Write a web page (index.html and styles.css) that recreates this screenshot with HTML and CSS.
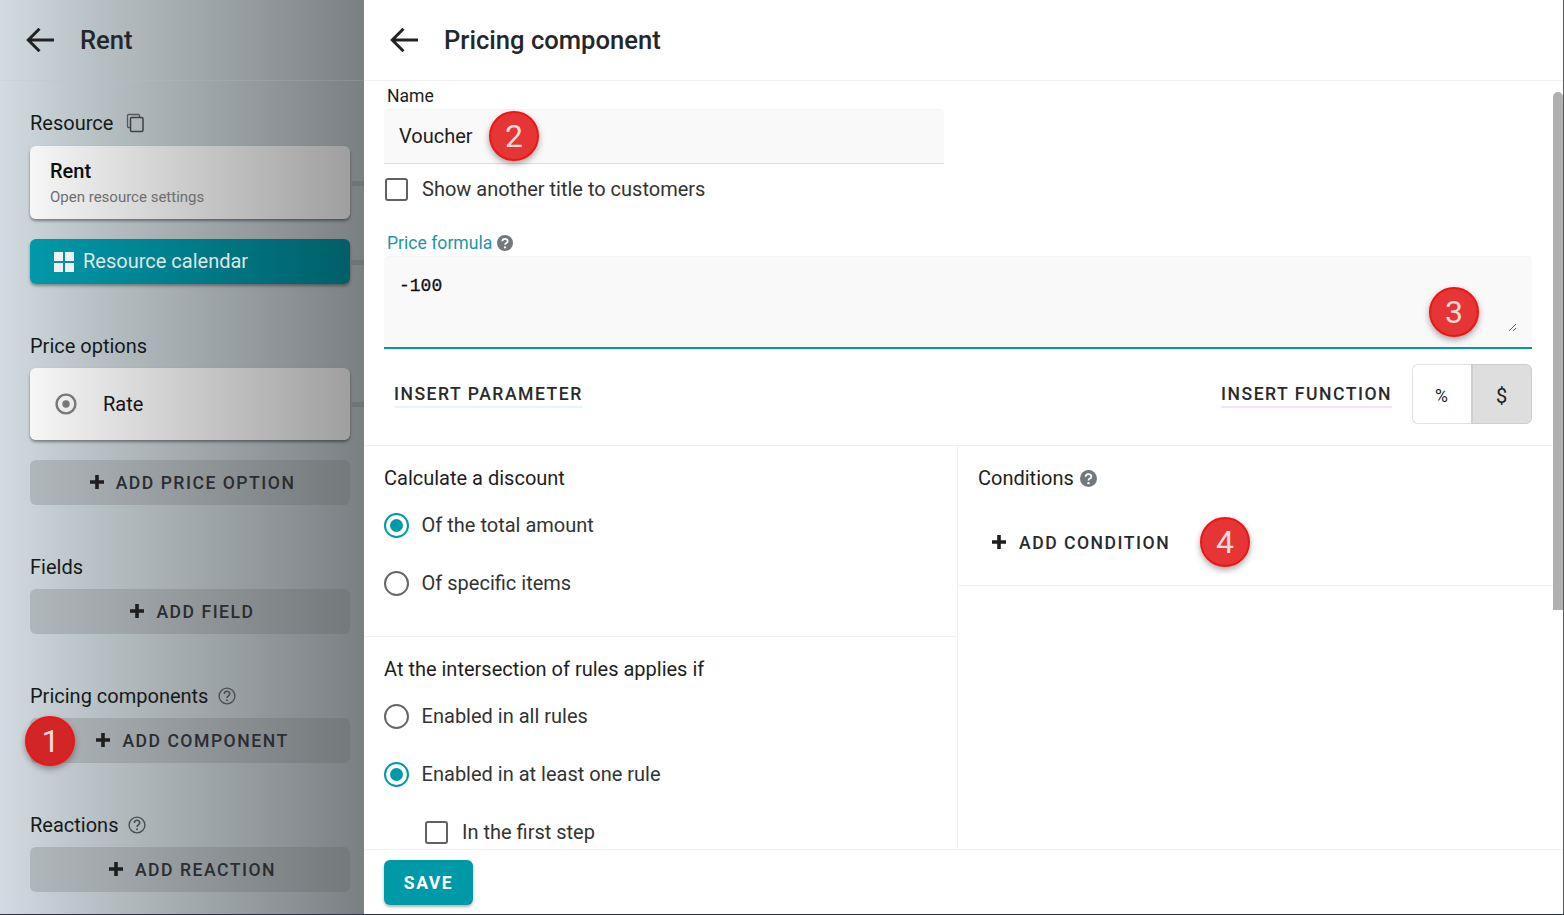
FILE: index.html
```html
<!DOCTYPE html>
<html lang="en">
<head>
<meta charset="utf-8">
<title>Pricing component</title>
<link rel="stylesheet" href="styles.css">
</head>
<body>
<div class="app">
  <aside class="side">
    <header class="head head-side">
      <svg class="back" viewBox="0 0 28 24"><path d="M28 12H3M13.500.8 2.300 12l11.200 11.200" fill="none" stroke="currentColor" stroke-width="3"/></svg>
      <span class="head-title">Rent</span>
    </header>
    <div class="side-body">
      <div class="sec sec-resource">
        <span>Resource</span>
        <svg class="ico-copy" viewBox="0 0 20 20"><path d="M5 14.500H3.500a1 1 0 0 1-1-1V2.500a1 1 0 0 1 1-1h10a1 1 0 0 1 1 1V4" fill="none" stroke="#55595c" stroke-width="1.300"/><rect x="5.500" y="4.500" width="12.500" height="14" rx="1.200" fill="none" stroke="#3e4245" stroke-width="1.500"/></svg>
      </div>
      <div class="card card-res link">
        <div class="card-title">Rent</div>
        <div class="card-sub">Open resource settings</div>
      </div>
      <div class="teal-btn link">
        <svg class="ico-grid" viewBox="0 0 20 20"><path d="M0 0h9v9H0zM11 0h9v9h-9zM0 11h9v9H0zM11 11h9v9h-9z" fill="#f0f0f0"/></svg>
        <span>Resource calendar</span>
      </div>
      <div class="sec sec-price">Price options</div>
      <div class="card card-rate link">
        <svg class="ico-rate" viewBox="0 0 24 24"><circle cx="12" cy="12" r="9.400" fill="none" stroke="#777" stroke-width="2.400"/><circle cx="12" cy="12" r="3.700" fill="#777"/></svg>
        <span>Rate</span>
      </div>
      <div class="add-btn add-first"><svg class="plus" viewBox="0 0 14 14"><path d="M5.200 0h3.600v5.200H14v3.600H8.800V14H5.200V8.800H0V5.200h5.200z"/></svg><span>ADD PRICE OPTION</span></div>
      <div class="sec sec-fields">Fields</div>
      <div class="add-btn"><svg class="plus" viewBox="0 0 14 14"><path d="M5.200 0h3.600v5.200H14v3.600H8.800V14H5.200V8.800H0V5.200h5.200z"/></svg><span>ADD FIELD</span></div>
      <div class="sec sec-comp">
        <span>Pricing components</span>
        <svg class="ico-q" viewBox="0 0 18 18"><circle cx="9" cy="9" r="7.900" fill="none" stroke="#4b4f52" stroke-width="1.400"/><path d="M6.300 7a2.700 2.700 0 0 1 5.400 0c0 1.900-2.700 2-2.700 4" fill="none" stroke="#4b4f52" stroke-width="1.600"/><circle cx="9" cy="13.200" r="1" fill="#4b4f52"/></svg>
      </div>
      <div class="add-btn"><svg class="plus" viewBox="0 0 14 14"><path d="M5.200 0h3.600v5.200H14v3.600H8.800V14H5.200V8.800H0V5.200h5.200z"/></svg><span>ADD COMPONENT</span></div>
      <div class="sec sec-react">
        <span>Reactions</span>
        <svg class="ico-q" viewBox="0 0 18 18"><circle cx="9" cy="9" r="7.900" fill="none" stroke="#4b4f52" stroke-width="1.400"/><path d="M6.300 7a2.700 2.700 0 0 1 5.400 0c0 1.900-2.700 2-2.700 4" fill="none" stroke="#4b4f52" stroke-width="1.600"/><circle cx="9" cy="13.200" r="1" fill="#4b4f52"/></svg>
      </div>
      <div class="add-btn"><svg class="plus" viewBox="0 0 14 14"><path d="M5.200 0h3.600v5.200H14v3.600H8.800V14H5.200V8.800H0V5.200h5.200z"/></svg><span>ADD REACTION</span></div>
    </div>
    <div class="badge badge-dark b1">1</div>
  </aside>

  <main class="main">
    <header class="head head-main">
      <svg class="back" viewBox="0 0 28 24"><path d="M28 12H3M13.500.8 2.300 12l11.200 11.200" fill="none" stroke="currentColor" stroke-width="3"/></svg>
      <span class="head-title">Pricing component</span>
    </header>
    <div class="scroll">
      <section class="top">
        <label class="lbl">Name</label>
        <div class="input">Voucher</div>
        <div class="check-row"><span class="box"></span><span>Show another title to customers</span></div>
        <div class="lbl lbl-teal"><span>Price formula</span>
          <svg class="ico-qf" viewBox="0 0 16 16"><circle cx="8" cy="8" r="8" fill="#73787c"/><path d="M5.300 6.300a2.700 2.500 0 0 1 5.400 0c0 1.800-2.700 1.700-2.700 3.500" fill="none" stroke="#fff" stroke-width="1.700"/><circle cx="8" cy="12.400" r="1.100" fill="#fff"/></svg>
        </div>
        <div class="formula"><textarea class="ta" spellcheck="false">-100</textarea></div>
        <div class="insert-row">
          <span class="ins ins-param">INSERT PARAMETER</span>
          <div class="ins-right">
            <span class="ins ins-func">INSERT FUNCTION</span>
            <div class="toggle"><span class="tog">%</span><span class="tog tog-on">$</span></div>
          </div>
        </div>
      </section>
      <div class="cols">
        <div class="col-left">
          <section class="block block-a">
            <div class="ttl">Calculate a discount</div>
            <div class="radio-row first"><span class="radio on"></span><span>Of the total amount</span></div>
            <div class="radio-row"><span class="radio"></span><span>Of specific items</span></div>
          </section>
          <section class="block block-b">
            <div class="ttl">At the intersection of rules applies if</div>
            <div class="radio-row first"><span class="radio"></span><span>Enabled in all rules</span></div>
            <div class="radio-row"><span class="radio on"></span><span>Enabled in at least one rule</span></div>
            <div class="check-row nested"><span class="box"></span><span>In the first step</span></div>
          </section>
        </div>
        <div class="col-right">
          <section class="cond">
            <div class="ttl ttl-q"><span>Conditions</span>
              <svg class="ico-qf" viewBox="0 0 16 16"><circle cx="8" cy="8" r="8" fill="#73787c"/><path d="M5.300 6.300a2.700 2.500 0 0 1 5.400 0c0 1.800-2.700 1.700-2.700 3.500" fill="none" stroke="#fff" stroke-width="1.700"/><circle cx="8" cy="12.400" r="1.100" fill="#fff"/></svg>
            </div>
            <div class="add-cond"><svg class="plus" viewBox="0 0 14 14"><path d="M5.200 0h3.600v5.200H14v3.600H8.800V14H5.200V8.800H0V5.200h5.200z"/></svg><span>ADD CONDITION</span></div>
          </section>
        </div>
      </div>
      <div class="badge b2">2</div>
      <div class="badge b3">3</div>
      <div class="badge b4">4</div>
    </div>
    <footer class="foot"><button class="save">SAVE</button></footer>
    <div class="scrollbar"></div>
  </main>
</div>
</body>
</html>
```
FILE: styles.css
```css
* { box-sizing: border-box; }
html, body { margin: 0; height: 100%; overflow: hidden; }
body { font-family: Roboto, "Noto Sans", sans-serif; color: #1c1c1c; background: #fff; }
.app { display: flex; height: 915px; border-bottom: 1px solid #2c3040; border-right: 1px solid #5a5a5a; }

.side { position: relative; width: 364px; flex: none; background: linear-gradient(90deg, #d1dbe1 0%, #b4bdc0 30%, #9ca3a6 60%, #7a7f82 100%); }
.head { height: 81px; display: flex; align-items: center; border-bottom: 1px solid rgba(0,0,0,.05); }
.head-side { padding-left: 26px; border-bottom-color: #b9c4ca33; }
.head-main { padding-left: 26px; border-bottom-color: #f1f1f1; }
.back { width: 28px; height: 24px; color: #222; flex: none; }
.head-title { margin-left: 26px; font-size: 25.600px; font-weight: 500; color: #24272a; }

.side-body { padding: 0 14px 0 30px; }
.sec { display: flex; align-items: center; font-size: 20px; height: 24px; color: #16191c; }
.sec-resource { margin-top: 30px; }
.sec-price { margin-top: 50px; }
.sec-fields { margin-top: 50px; }
.sec-comp { margin-top: 50px; }
.sec-react { margin-top: 50px; }
.ico-copy { width: 20px; height: 20px; margin-left: 12px; }
.ico-q { width: 18px; height: 18px; margin-left: 10px; }

.card { border-radius: 6px; background: linear-gradient(90deg, #f6f6f6, #9f9f9f); box-shadow: 0 2px 3px rgba(0,0,0,.4); }
.link { position: relative; }
.link::after { content: ""; position: absolute; left: 100%; top: 50%; width: 14px; height: 5px; margin-top: -2px; background: #6f7477; }
.card-res { height: 73px; margin-top: 11px; padding: 13px 20px; }
.card-title { font-size: 20px; font-weight: 500; color: #0d0d0d; line-height: 24px; }
.card-sub { font-size: 15px; line-height: 20px; margin-top: 4px; color: #6e6e6e; }
.teal-btn { height: 45px; margin-top: 20px; border-radius: 6px; padding: 0 0 2px 24px; display: flex; align-items: center; font-size: 20px; color: #dfe6e6; background: linear-gradient(90deg, #0099aa, #005f68); box-shadow: 0 2px 3px rgba(0,0,0,.35); }
.teal-btn .ico-grid { margin-top: 2px; }
.ico-grid { width: 20px; height: 20px; margin-right: 9px; }
.card-rate { height: 72px; margin-top: 10px; padding-left: 24px; display: flex; align-items: center; font-size: 20px; color: #141414; }
.ico-rate { width: 24px; height: 24px; margin-right: 25px; }
.add-btn { height: 45px; margin-top: 10px; padding-left: 5px; border-radius: 6px; display: flex; align-items: center; justify-content: center; font-size: 17.600px; font-weight: 500; letter-spacing: 1.500px; color: #2a2d31; background: linear-gradient(90deg, #b0b7ba, #74797b); }
.add-first { margin-top: 20px; }
.plus { width: 14px; height: 14px; margin: 0 12px 2px 0; fill: #1e1e1e; flex: none; }

.badge { position: absolute; width: 50px; height: 50px; border-radius: 50%; display: flex; align-items: center; justify-content: center; font-size: 32px; color: #f6dada; background: #e53535; border: 2px solid #f21414; box-shadow: 0 3px 6px rgba(0,0,0,.35); z-index: 5; }
.badge-dark { background: #d12528; color: #f3dcdc; padding-left: 1px; }
.b1 { left: 25px; top: 716px; }
.b2 { left: 125px; top: 30px; }
.b3 { left: 1065px; top: 206px; }
.b4 { left: 836px; top: 436px; }

.main { position: relative; flex: 1; display: flex; flex-direction: column; min-width: 0; }
.scroll { position: relative; flex: 1; overflow: hidden; min-height: 0; }
.top { padding: 0 31px 0 20px; height: 365px; border-bottom: 1px solid #f1f1f1; }
.lbl { display: block; font-size: 17.600px; line-height: 20px; padding: 5px 0 0 3px; height: 28px; color: #1c1c1c; }
.input { width: 560px; height: 55px; background: #f9f9f9; border-top: 1px solid #f4f4f4; border-bottom: 1px solid #dcdcdc; border-radius: 4px 4px 0 0; display: flex; align-items: center; padding: 0 0 2px 15px; font-size: 20px; color: #1c1c1c; }
.check-row { display: flex; align-items: center; font-size: 20px; color: #333; }
.top .check-row { margin-top: 14px; height: 22px; padding-left: 1px; }
.box { width: 23px; height: 23px; border: 2px solid #5f6164; border-radius: 3px; margin-right: 14px; flex: none; background: #fff; }
.lbl-teal { display: flex; align-items: center; color: #1c96a8; margin-top: 31px; height: 24px; padding: 0 0 0 3px; }
.ico-qf { width: 16px; height: 16px; margin-left: 5px; flex: none; }
.formula { height: 93px; margin-top: 1px; padding: 15px; background: #f9f9f9; border-top: 1px solid #f4f4f4; border-bottom: 2px solid #0099a8; border-radius: 4px 4px 0 0; }
.ta { display: block; width: 100%; height: 60px; padding: 0; border: 0; outline: 0; background: transparent; font-family: "Liberation Mono", monospace; font-size: 18px; line-height: 28px; color: #111; -webkit-text-stroke: .3px #111; }
.insert-row { display: flex; justify-content: space-between; align-items: center; margin-top: 15px; height: 60px; }
.ins { font-size: 17.600px; font-weight: 500; letter-spacing: 1.500px; color: #2a2a2a; line-height: 24px; display: inline-block; margin-top: 2px; }
.ins-param { margin-left: 10px; border-bottom: 2px solid #e6f6fa; }
.ins-func { border-bottom: 2px solid #f0e4fa; margin-right: 20px; }
.ins-right { display: flex; align-items: center; }
.toggle { display: flex; width: 120px; height: 60px; }
.tog { display: flex; align-items: center; justify-content: center; width: 59px; font-size: 17.600px; color: #1c1c1c; padding: 4px 1px 0 0; border: 1px solid #e2e2e2; border-right: 0; border-radius: 6px 0 0 6px; }
.tog-on { width: 61px; background: #dedede; border: 1px solid #cfcfcf; border-left-width: 2px; border-radius: 0 6px 6px 0; font-size: 20px; padding: 3px 1px 0 0; }

.cols { display: flex; height: 404px; }
.col-left { width: 594px; border-right: 1px solid #f1f1f1; flex: none; }
.col-right { flex: 1; padding-right: 10px; }
.block { padding: 0 20px; }
.block-a { height: 191px; border-bottom: 1px solid #f1f1f1; padding-top: 20px; }
.block-b { padding-top: 20px; }
.ttl { font-size: 20px; line-height: 24px; color: #1e1e1e; }
.ttl-q { display: flex; align-items: center; }
.ttl-q .ico-qf { width: 17px; height: 17px; margin-left: 6px; }
.radio-row { display: flex; align-items: center; font-size: 20px; color: #333; height: 26px; margin-top: 32px; }
.radio-row.first { margin-top: 22px; }
.radio { width: 25px; height: 25px; border: 2px solid #666; border-radius: 50%; margin-right: 12.600px; flex: none; position: relative; }
.radio.on { border-color: #0099a8; }
.radio.on::after { content: ""; position: absolute; inset: 4px; border-radius: 50%; background: #0099a8; }
.check-row.nested { margin-top: 32px; margin-left: 41px; height: 26px; }
.cond { height: 140px; padding: 20px 0 0 20px; border-bottom: 1px solid #f1f1f1; }
.add-cond { display: flex; align-items: center; margin: 40px 0 0 14px; font-size: 17.600px; font-weight: 500; letter-spacing: 1.500px; color: #2a2a2a; height: 26px; }
.add-cond .plus { margin-right: 13px; }

.foot { height: 65px; flex: none; border-top: 1px solid #f1f1f1; padding: 10px 20px; }
.save { display: block; width: 89px; height: 45px; border: 0; border-radius: 6px; background: #0099a8; color: #fff; font-family: Roboto, sans-serif; font-size: 17.600px; font-weight: 700; letter-spacing: 1.500px; box-shadow: 0 2px 3px rgba(0,0,0,.3); padding: 0; }
.scrollbar { position: absolute; right: 0; top: 92px; width: 10px; height: 518px; border-radius: 5px 5px 0 0; background: #b0b0b0; }
```
